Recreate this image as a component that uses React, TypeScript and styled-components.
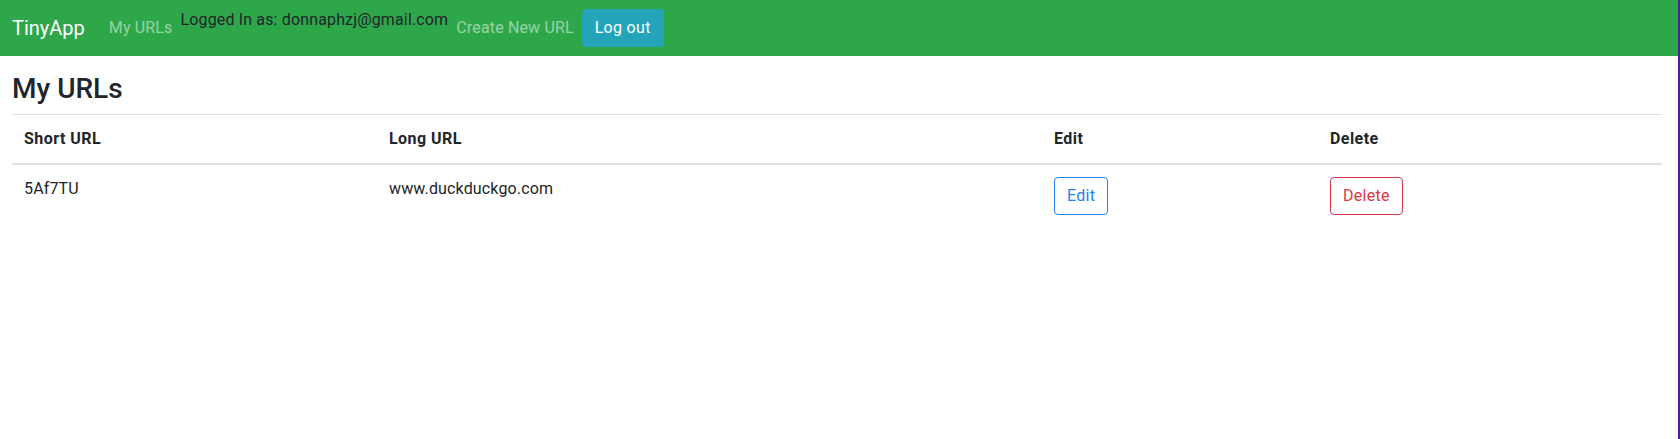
import React from "react";
import styled, { createGlobalStyle } from "styled-components";

const GlobalStyle = createGlobalStyle`
  *, *::before, *::after { box-sizing: border-box; }
  html, body { margin: 0; padding: 0; }
  body {
    font-family: Roboto, "Liberation Sans", Arial, sans-serif;
    font-size: 16px;
    line-height: 1.5;
    letter-spacing: 0.15px;
    color: #212529;
    background: #fff;
  }
`;

const Page = styled.div`
  min-height: 100vh;
  border-right: 2px solid #531c9c;
`;

const Navbar = styled.nav`
  display: flex;
  align-items: center;
  height: 56px;
  padding: 8px 12px;
  background: #2ea74b;
`;

const Brand = styled.a`
  font-size: 20px;
  line-height: 30px;
  padding: 5px 0;
  margin-right: 16px;
  letter-spacing: 0;
  color: #fff;
  text-decoration: none;
`;

const NavLink = styled.a`
  display: block;
  padding: 8px;
  line-height: 24px;
  color: rgba(255, 255, 255, 0.5);
  text-decoration: none;
`;

const LoggedIn = styled.p`
  margin: 0 0 16px;
  line-height: 24px;
  color: #212529;
`;

const Button = styled.button<{ $variant: "info" | "primary" | "danger"; $outline?: boolean }>`
  display: inline-block;
  font-family: inherit;
  font-size: 16px;
  line-height: 24px;
  letter-spacing: 0.3px;
  padding: 6px 12px;
  border-radius: 4px;
  border: 1px solid
    ${(p) => (p.$variant === "info" ? "#24a4b9" : p.$variant === "primary" ? "#1e80f6" : "#dc3545")};
  background: ${(p) => (p.$outline ? "transparent" : p.$variant === "info" ? "#24a4b9" : "#1e80f6")};
  color: ${(p) =>
    !p.$outline ? "#fff" : p.$variant === "primary" ? "#1e80f6" : "#dc3545"};
  cursor: pointer;
`;

const Main = styled.main`
  padding: 0 16px 0 12px;
`;

const Title = styled.h3`
  margin: 16px 0 8px;
  font-size: 28px;
  font-weight: 500;
  line-height: 1.2;
  letter-spacing: 0;
`;

const Table = styled.table`
  width: 100%;
  table-layout: fixed;
  border-collapse: collapse;
`;

const Col = styled.col<{ $w?: number }>`
  width: ${(p) => (p.$w ? `${p.$w}px` : "auto")};
`;

const Th = styled.th`
  padding: 12px;
  text-align: left;
  vertical-align: bottom;
  font-weight: 700;
  letter-spacing: 0.45px;
  border-top: 1px solid #dee2e6;
  border-bottom: 2px solid #dee2e6;
`;

const Td = styled.td`
  padding: 12px;
  vertical-align: top;
  border-top: 1px solid #dee2e6;
`;

const urls = [{ short: "5Af7TU", long: "www.duckduckgo.com" }];

export default function App() {
  return (
    <>
      <GlobalStyle />
      <Page>
        <Navbar>
          <Brand href="#">TinyApp</Brand>
          <NavLink href="#">My URLs</NavLink>
          <LoggedIn>Logged In as: donnaphzj@gmail.com</LoggedIn>
          <NavLink href="#">Create New URL</NavLink>
          <Button $variant="info">Log out</Button>
        </Navbar>
        <Main>
          <Title>My URLs</Title>
          <Table>
            <colgroup>
              <Col $w={365} />
              <Col $w={665} />
              <Col $w={276} />
              <Col />
            </colgroup>
            <thead>
              <tr>
                <Th>Short URL</Th>
                <Th>Long URL</Th>
                <Th>Edit</Th>
                <Th>Delete</Th>
              </tr>
            </thead>
            <tbody>
              {urls.map((u) => (
                <tr key={u.short}>
                  <Td>{u.short}</Td>
                  <Td>{u.long}</Td>
                  <Td>
                    <Button $variant="primary" $outline>
                      Edit
                    </Button>
                  </Td>
                  <Td>
                    <Button $variant="danger" $outline>
                      Delete
                    </Button>
                  </Td>
                </tr>
              ))}
            </tbody>
          </Table>
        </Main>
      </Page>
    </>
  );
}
